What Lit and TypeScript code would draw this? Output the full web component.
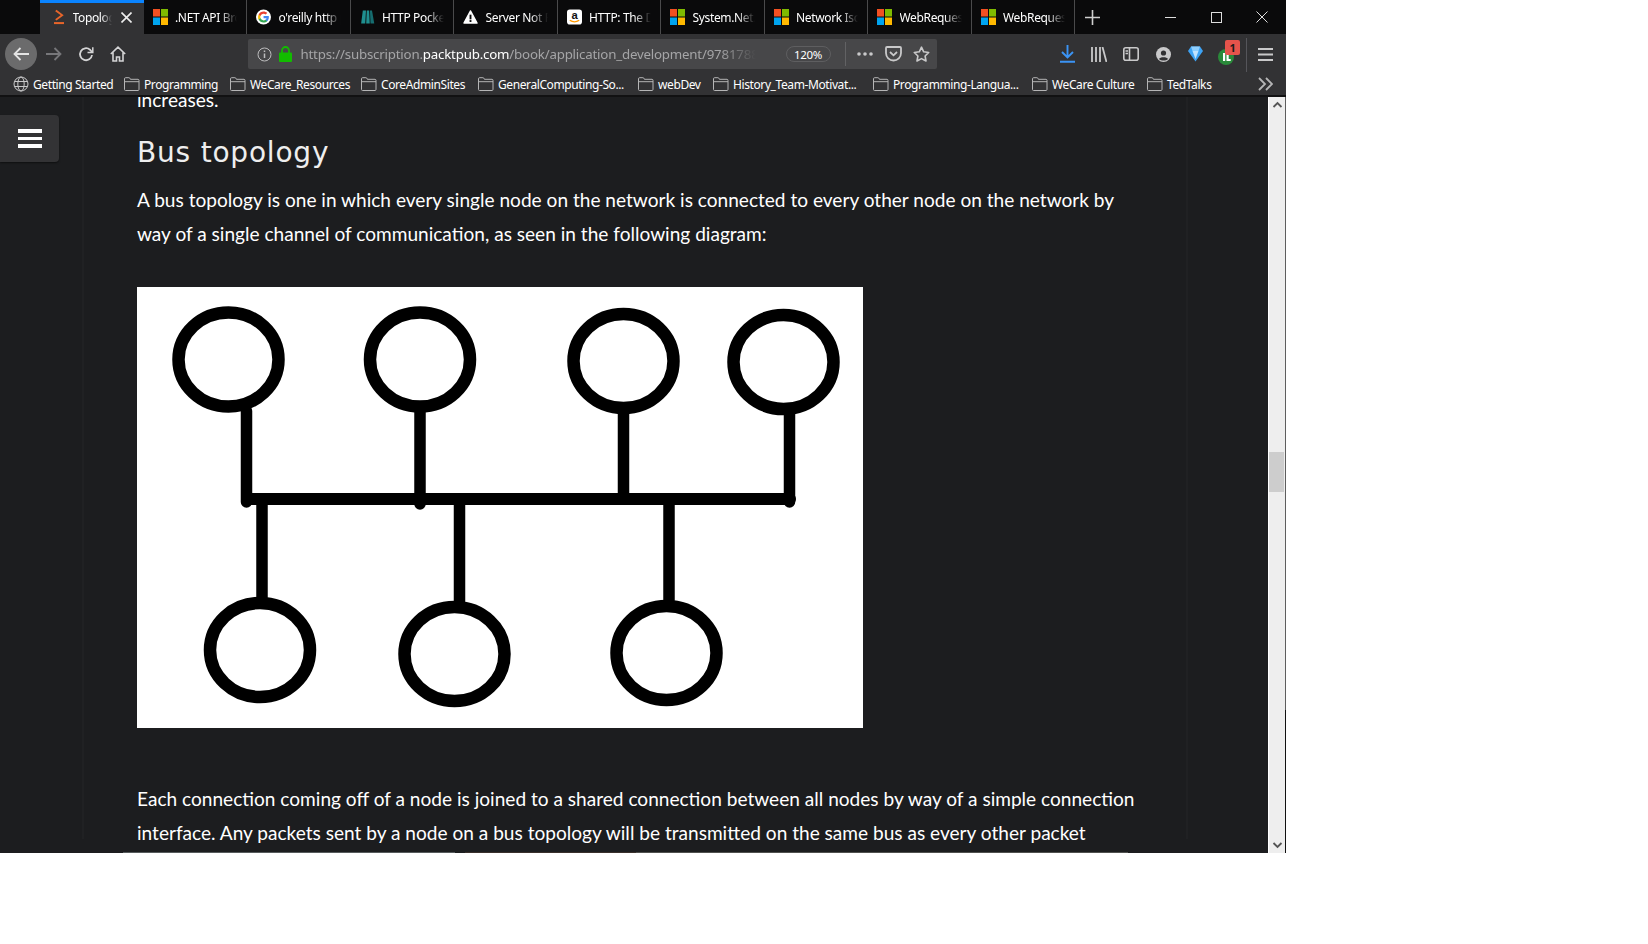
import { LitElement, html, css, svg } from "lit";
import { customElement } from "lit/decorators.js";

const msLogo = html`<svg class="fav" viewBox="0 0 15 16">
  <rect width="7" height="7.5" fill="#f25022" /><rect x="8" width="7" height="7.5" fill="#7fba00" />
  <rect y="8.5" width="7" height="7.5" fill="#00a4ef" /><rect x="8" y="8.5" width="7" height="7.5" fill="#ffb900" />
</svg>`;

const googleLogo = html`<svg class="fav" viewBox="0 0 24 24">
  <circle cx="12" cy="12" r="12" fill="#fff" />
  <g transform="translate(2.5 2.5) scale(.8)">
    <path fill="#4285F4" d="M22.56 12.25c0-.78-.07-1.53-.2-2.25H12v4.26h5.92c-.26 1.37-1.04 2.53-2.21 3.31v2.77h3.57c2.08-1.92 3.28-4.74 3.28-8.09z" />
    <path fill="#34A853" d="M12 23c2.97 0 5.46-.98 7.28-2.66l-3.57-2.77c-.98.66-2.23 1.06-3.71 1.06-2.86 0-5.29-1.93-6.16-4.53H2.18v2.84C3.99 20.53 7.7 23 12 23z" />
    <path fill="#FBBC05" d="M5.84 14.09c-.22-.66-.35-1.36-.35-2.09s.13-1.43.35-2.09V7.07H2.18C1.43 8.55 1 10.22 1 12s.43 3.45 1.18 4.93l2.85-2.22.81-.62z" />
    <path fill="#EA4335" d="M12 5.38c1.62 0 3.06.56 4.21 1.64l3.15-3.15C17.45 2.09 14.97 1 12 1 7.7 1 3.99 3.47 2.18 7.07l3.66 2.84c.87-2.6 3.3-4.53 6.16-4.53z" />
  </g>
</svg>`;

const pocketBook = html`<svg class="fav" viewBox="0 0 16 16">
  <path fill="#1f8f8f" d="M3 1h3.4L5.6 15H1.2zM7.2 1h2.6l.6 14H6.6z" />
  <path fill="#166d70" d="M10.6 1h2.2l2.4 14h-4z" />
</svg>`;

const warning = html`<svg class="fav" viewBox="0 0 16 16">
  <path fill="#fff" stroke="#fff" stroke-width="1.4" stroke-linejoin="round" d="M8 1.5 15 14.5H1z" />
  <rect x="7" y="5.5" width="2" height="5" fill="#0a0a0b" /><rect x="7" y="11.3" width="2" height="2" fill="#0a0a0b" />
</svg>`;

const amazon = html`<svg class="fav" viewBox="0 0 16 16">
  <rect width="16" height="16" rx="3" fill="#fff" />
  <text x="8" y="10.5" text-anchor="middle" font-family="Liberation Sans" font-weight="700" font-size="12" fill="#111">a</text>
  <path d="M3 11.5q5 3.4 10 0" fill="none" stroke="#f90" stroke-width="1.5" />
</svg>`;

const packt = html`<svg class="fav packt" viewBox="0 0 11 16">
  <path d="M2 1l7 6-7 6" transform="scale(1 .86)" fill="none" stroke="#e8652a" stroke-width="2.2" />
  <rect y="13.6" width="11" height="2.2" fill="#e8652a" />
</svg>`;

const folder = svg`<path d="M.5 3V1.8c0-.7.4-1.1 1-1.1h3.4c.6 0 1 .3 1.3 1.1l.2.5h7.6c.6 0 1 .4 1 1v9.2c0 .6-.4 1-1 1h-12.5c-.6 0-1-.4-1-1zM.5 4.7h14.500" fill="none" stroke="#b5b5b6" />`;

const globe = html`<svg class="globe" viewBox="0 0 16 16" fill="none" stroke="#c9c9ca">
  <circle cx="8" cy="8" r="7" /><ellipse cx="8" cy="8" rx="3.200" ry="7" /><path d="M1.400 5.500h13.200M1.400 10.500h13.200" />
</svg>`;

const tabs: [string, unknown][] = [
  [".NET API Browser", msLogo],
  ["o'reilly http pocket", googleLogo],
  ["HTTP Pocket Ref", pocketBook],
  ["Server Not Found", warning],
  ["HTTP: The Definitive", amazon],
  ["System.Net.Http", msLogo],
  ["Network Isolation", msLogo],
  ["WebRequest Class", msLogo],
  ["WebRequest Class", msLogo],
];

const bookmarks: [string, number][] = [
  ["Programming", 106],
  ["WeCare_Resources", 131],
  ["CoreAdminSites", 117],
  ["GeneralComputing-So...", 160],
  ["webDev", 75],
  ["History_Team-Motivat...", 160],
  ["Programming-Langua...", 159],
  ["WeCare Culture", 115],
  ["TedTalks", 90],
];

@customElement("app-root")
export class AppRoot extends LitElement {
  static styles = css`
    :host {
      display: block;
      width: 1648px;
      height: 944px;
      background: #fff;
      overflow: hidden;
    }

    .window {
      width: 1286px;
      height: 853px;
      display: flex;
      flex-direction: column;
      background: #323234;
      font-family: "Noto Sans", sans-serif;
      font-size: 12px;
      letter-spacing: -0.35px;
      color: #fff;
      overflow: hidden;
    }

    /* tab strip */
    .tabbar {
      height: 34px;
      flex: none;
      display: flex;
      background: #0a0a0b;
      padding-left: 40px;
    }

    .tab {
      width: 103.5px;
      box-sizing: border-box;
      display: flex;
      align-items: center;
      gap: 7.5px;
      padding: 0 9px 0 9px;
      border-right: 1px solid #4a4a4b;
    }

    .tab.active {
      background: #323234;
      border-right: none;
      border-top: 3px solid #0a84ff;
      padding: 0 12px 3px 14px;
      gap: 8.5px;
    }

    .fav {
      width: 15px;
      height: 16px;
      flex: none;
    }

    .fav.packt {
      width: 10px;
    }

    .tab-title {
      flex: 1;
      min-width: 0;
      white-space: nowrap;
      overflow: hidden;
      -webkit-mask-image: linear-gradient(to right, #000 72%, transparent);
      mask-image: linear-gradient(to right, #000 72%, transparent);
    }

    .tab-close {
      width: 11px;
      height: 11px;
      flex: none;
    }

    .new-tab {
      width: 34px;
      display: flex;
      align-items: center;
      justify-content: center;
    }

    .win-controls {
      margin-left: auto;
      display: flex;
      padding-right: 1px;
    }

    .win-btn {
      width: 46px;
      display: flex;
      align-items: center;
      justify-content: center;
    }

    /* nav toolbar */
    .toolbar {
      height: 38px;
      flex: none;
      box-sizing: border-box;
      display: flex;
      align-items: flex-start;
      padding: 4px 0 0 5px;
    }

    .back {
      width: 32px;
      height: 32px;
      margin-right: 1px;
      border-radius: 50%;
      background: #6b6b6c;
      display: flex;
      align-items: center;
      justify-content: center;
    }

    .nav-btn {
      width: 32px;
      height: 32px;
      display: flex;
      align-items: center;
      justify-content: center;
    }

    .urlbar {
      margin: 1px 0 0 113.5px;
      width: 689.5px;
      height: 30px;
      box-sizing: border-box;
      display: flex;
      align-items: center;
      background: #474749;
      border-radius: 2px;
      padding-left: 9px;
      font-size: 13.300px;
      letter-spacing: -0.2px;
    }

    .lock {
      margin-left: 7px;
    }

    .url {
      margin-left: 9px;
      width: 455px;
      flex: none;
      white-space: nowrap;
      overflow: hidden;
      color: #a5a5a7;
      -webkit-mask-image: linear-gradient(to right, #000 92%, transparent);
      mask-image: linear-gradient(to right, #000 92%, transparent);
    }

    .url b {
      color: #fff;
      font-weight: 400;
    }

    .zoom {
      margin-left: 30px;
      width: 45px;
      height: 16px;
      box-sizing: border-box;
      border: 1px solid #5e5e60;
      border-radius: 8px;
      display: flex;
      align-items: center;
      justify-content: center;
      font-size: 11.500px;
      letter-spacing: -0.3px;
    }

    .url-sep {
      width: 1px;
      height: 24px;
      background: #626264;
      margin: 0 5px 0 14px;
    }

    .url-btn {
      width: 28.500px;
      height: 24px;
      display: flex;
      align-items: center;
      justify-content: center;
    }

    .tools {
      margin-left: 114px;
      display: flex;
      align-items: center;
      height: 32px;
    }

    .tool {
      position: relative;
      width: 32px;
      height: 32px;
      display: flex;
      align-items: center;
      justify-content: center;
    }

    .green {
      margin: 6px 0 0 -2px;
    }

    .badge {
      position: absolute;
      left: 14px;
      top: 2px;
      width: 15px;
      height: 15px;
      background: #e5534b;
      border-radius: 2px;
      color: #1b1b1b;
      font-size: 11px;
      font-weight: 700;
      line-height: 15px;
      text-align: center;
    }

    .tool-sep {
      width: 1px;
      height: 34px;
      background: #55555a;
      margin-left: 2.5px;
    }

    .menu-btn {
      width: 37px;
      height: 32px;
      display: flex;
      align-items: center;
      justify-content: center;
    }

    /* bookmarks */
    .bookmarks {
      height: 25px;
      flex: none;
      box-sizing: border-box;
      display: flex;
      align-items: center;
      padding: 1px 0 0 13px;
      border-bottom: 2px solid #111112;
      letter-spacing: -0.4px;
    }

    .bm {
      display: flex;
      align-items: center;
      gap: 4px;
      flex: none;
      white-space: nowrap;
    }

    .bm-icon {
      width: 16px;
      height: 14px;
      flex: none;
    }

    .globe {
      width: 16px;
      height: 16px;
      flex: none;
    }

    .bm-more {
      margin-left: auto;
      margin-right: 13px;
      width: 15px;
      height: 14px;
    }

    /* page */
    .viewport {
      flex: 1;
      min-height: 0;
      display: flex;
      background: #1c1d1f;
    }

    .page {
      position: relative;
      flex: 1;
      min-width: 0;
      overflow: hidden;
      background: #1c1d1f;
    }

    .side-btn {
      position: absolute;
      left: 0;
      top: 18px;
      width: 59px;
      height: 47px;
      background: #333335;
      border-radius: 0 4px 4px 0;
      box-shadow: 0 1px 2px rgba(0, 0, 0, 0.5);
      display: flex;
      flex-direction: column;
      justify-content: center;
      gap: 4px;
      padding-left: 18px;
      box-sizing: border-box;
    }

    .side-btn i {
      display: block;
      width: 24px;
      height: 3.500px;
      background: #fff;
    }

    .column {
      box-sizing: border-box;
      margin-left: 82px;
      width: 1106px;
      height: 100%;
      padding: 0 0 0 53px;
      border-left: 2px solid #202123;
      border-right: 2px solid #202123;
      font-family: Lato, sans-serif;
      font-size: 19.080px;
      line-height: 34px;
      letter-spacing: 0;
      color: #fff;
    }

    .column p {
      margin: 0;
      width: 1000px;
    }

    .column p.clipped {
      margin-top: -14px;
    }

    h2 {
      margin: 18px 0 12px;
      font-family: "DejaVu Sans", sans-serif;
      font-size: 28px;
      font-weight: 400;
      line-height: 36px;
      letter-spacing: 0.8px;
      color: #eee;
    }

    .figure {
      display: block;
      width: 726px;
      height: 441px;
      margin: 36px 0 53.5px;
      background: #fff;
    }

    .fold-line {
      position: absolute;
      left: 123px;
      bottom: 0;
      width: 1005px;
      height: 1px;
      background: linear-gradient(to right, #565b5c 33%, #1c1d1f 33%, #1c1d1f 34%, #3a302c 34%, #3a302c 51%, #50514f 51%);
    }

    .scrollbar {
      width: 16px;
      margin-left: 1px;
      flex: none;
      background: #eeeeee;
      display: flex;
      flex-direction: column;
      align-items: center;
      justify-content: space-between;
      position: relative;
      border-left: 1px solid #fff;
      box-sizing: content-box;
    }

    .thumb {
      position: absolute;
      left: 0;
      top: 355px;
      width: 15px;
      height: 40px;
      background: #cdcdcd;
    }

    .arrow {
      width: 15px;
      height: 16px;
      display: block;
    }

    .edge {
      width: 1px;
      flex: none;
      background: linear-gradient(#5e5e5e 613px, #111 613px);
    }
  `;

  private renderFigure() {
    const top = [
      [228.5, 359.5],
      [420, 359.5],
      [623.5, 361],
      [783.5, 362],
    ];
    const bottom = [
      [260, 650],
      [454.5, 654],
      [666.5, 653],
    ];
    const lines = [
      [246.5, 411, 502],
      [420, 411, 504],
      [623.5, 413, 499],
      [789.5, 414, 502],
      [262, 499, 597],
      [459.5, 499, 601],
      [669, 499, 600],
    ];
    return html`<svg class="figure" viewBox="137 287 726 441">
      <g fill="none" stroke="#000" stroke-width="11.500" stroke-linecap="round">
        ${[...top, ...bottom].map(([cx, cy]) => svg`<ellipse cx=${cx} cy=${cy} rx="50" ry="47" stroke-width="12.500" />`)}
        ${lines.map(([x, y1, y2]) => svg`<path d="M${x} ${y1}V${y2}" />`)}
        <path d="M248 499H790" stroke-width="12" />
      </g>
    </svg>`;
  }

  render() {
    return html`<div class="window">
      <div class="tabbar">
        <div class="tab active">
          ${packt}
          <span class="tab-title">Topology</span>
          <svg class="tab-close" viewBox="0 0 11 11" stroke="#eee" stroke-width="1.600"><path d="M.5.5l10 10M10.500.5l-10 10" /></svg>
        </div>
        ${tabs.map(([title, icon]) => html`<div class="tab">${icon}<span class="tab-title">${title}</span></div>`)}
        <div class="new-tab">
          <svg width="15" height="15" viewBox="0 0 15 15" stroke="#cfcfcf" stroke-width="1.600"><path d="M7.500 0v15M0 7.500h15" /></svg>
        </div>
        <div class="win-controls">
          <div class="win-btn"><svg width="11" height="11" stroke="#ddd"><path d="M0 5.500h11" /></svg></div>
          <div class="win-btn"><svg width="11" height="11" fill="none" stroke="#ddd"><rect x=".5" y=".5" width="10" height="10" /></svg></div>
          <div class="win-btn"><svg width="12" height="12" stroke="#ddd"><path d="M.5.5l11 11M11.500.5l-11 11" /></svg></div>
        </div>
      </div>

      <div class="toolbar">
        <div class="back">
          <svg width="16" height="14" viewBox="0 0 16 14" fill="none" stroke="#e4e4e4" stroke-width="1.800"><path d="M16 7H1.500M7.500 1 1.500 7l6 6" /></svg>
        </div>
        <div class="nav-btn">
          <svg width="16" height="14" viewBox="0 0 16 14" fill="none" stroke="#77777a" stroke-width="1.800"><path d="M0 7h14.500M8.500 1l6 6-6 6" /></svg>
        </div>
        <div class="nav-btn">
          <svg width="16" height="16" viewBox="0 0 16 16" fill="none" stroke="#d4d4d5" stroke-width="1.800"><path d="M14 9a6 6 0 1 1-2-5.300L14 6" /><path d="M14.800 1.200V6.500H9.500" stroke-width="1.500" /></svg>
        </div>
        <div class="nav-btn">
          <svg width="16" height="16" viewBox="0 0 16 16" fill="none" stroke="#d4d4d5" stroke-width="1.600"><path d="M.8 8 8 1.200 15.200 8M3 6.500V15h3.500v-4h3v4H13V6.500" /></svg>
        </div>

        <div class="urlbar">
          <svg width="15" height="15" viewBox="0 0 15 15" fill="none" stroke="#bdbdbe"><circle cx="7.500" cy="7.500" r="6.500" /><path d="M7.500 6.500v4.500M7.500 3.500v1.500" stroke-width="1.500" /></svg>
          <svg class="lock" width="13" height="16" viewBox="0 0 13 16"><path d="M3 7V4.500a3.500 3.500 0 0 1 7 0V7" fill="none" stroke="#12bc00" stroke-width="1.800" /><rect y="6.500" width="13" height="9.500" rx="1" fill="#12bc00" /></svg>
          <div class="url">https://subscription.<b>packtpub.com</b>/book/application_development/9781788</div>
          <div class="zoom">120%</div>
          <div class="url-sep"></div>
          <div class="url-btn">
            <svg width="16" height="4" fill="#c9c9ca"><circle cx="2" cy="2" r="1.800" /><circle cx="8" cy="2" r="1.800" /><circle cx="14" cy="2" r="1.800" /></svg>
          </div>
          <div class="url-btn">
            <svg width="17" height="16" viewBox="0 0 17 16" fill="none" stroke="#c9c9ca" stroke-width="1.800"><path d="M2 1h13c.5 0 1 .4 1 1v5a7.500 7.500 0 0 1-15 0V2c0-.6.500-1 1-1z" /><path d="M5 6l3.500 3.300L12 6" /></svg>
          </div>
          <div class="url-btn">
            <svg width="17" height="16" viewBox="0 0 17 16" fill="none" stroke="#c9c9ca" stroke-width="1.600" stroke-linejoin="round"><path d="M8.500 1.200l2.200 4.600 5 .7-3.600 3.500.9 5-4.500-2.400L4 15l.9-5L1.300 6.500l5-.7z" /></svg>
          </div>
        </div>

        <div class="tools">
          <div class="tool">
            <svg width="15" height="18" viewBox="0 0 15 18" fill="none" stroke="#3b94f5" stroke-width="1.900"><path d="M7.500 0v12M2 7l5.500 5.500L13 7M0 16.800h15" /></svg>
          </div>
          <div class="tool">
            <svg width="16" height="15" viewBox="0 0 16 15" fill="none" stroke="#c9c9ca" stroke-width="1.800"><path d="M1 0v15M5 0v15M9 0v15M11.500 0l4 15" /></svg>
          </div>
          <div class="tool">
            <svg width="16" height="14" viewBox="0 0 16 14" fill="none" stroke="#c9c9ca" stroke-width="1.600"><rect x=".8" y=".8" width="14.400" height="12.400" rx="2" /><path d="M6.500 1v12M2.500 4h2.500M2.500 6.500h2.500" /></svg>
          </div>
          <div class="tool">
            <svg width="15" height="15" viewBox="0 0 15 15"><circle cx="7.500" cy="7.500" r="7.500" fill="#c9c9ca" /><circle cx="7.500" cy="6" r="2.600" fill="#323234" /><path d="M3 12c1-2.400 8-2.400 9 0-2 2-7 2-9 0z" fill="#323234" /></svg>
          </div>
          <div class="tool">
            <svg width="15" height="16" viewBox="0 0 15 16"><path d="M3 .5h9L15 5 7.500 15.500 0 5z" fill="#3da3f5" /><path d="M4.500 5h6L7.500 13z" fill="#bfe3ff" /><path d="M3 .5h9L10.500 5h-6z" fill="#8fd0ff" /></svg>
          </div>
          <div class="tool">
            <svg class="green" width="16" height="16" viewBox="0 0 16 16"><circle cx="8" cy="8" r="8" fill="#2a8a3a" /><rect x="5" y="4" width="2.200" height="8" fill="#fff" /><path d="M8.500 4h2.200v6h2v2H8.500z" fill="#fff" /></svg>
            <span class="badge">1</span>
          </div>
        </div>
        <div class="tool-sep"></div>
        <div class="menu-btn">
          <svg width="15" height="13" fill="#c9c9ca"><rect width="15" height="2" /><rect y="5.500" width="15" height="2" /><rect y="11" width="15" height="2" /></svg>
        </div>
      </div>

      <div class="bookmarks">
        <div class="bm" style="width:111px">${globe}<span>Getting Started</span></div>
        ${bookmarks.map(
          ([name, w]) => html`<div class="bm" style="width:${w}px">
            <svg class="bm-icon" viewBox="0 0 16 14">${folder}</svg><span>${name}</span>
          </div>`
        )}
        <svg class="bm-more" viewBox="0 0 15 14" fill="none" stroke="#b5b5b6" stroke-width="1.800"><path d="M1 1l6 6-6 6M8 1l6 6-6 6" /></svg>
      </div>

      <div class="viewport">
        <div class="page">
          <div class="column">
            <p class="clipped">increases.</p>
            <h2>Bus topology</h2>
            <p>A bus topology is one in which every single node on the network is connected to every other node on the network by way of a single channel of communication, as seen in the following diagram:</p>
            ${this.renderFigure()}
            <p>Each connection coming off of a node is joined to a shared connection between all nodes by way of a simple connection interface. Any packets sent by a node on a bus topology will be transmitted on the same bus as every other packet</p>
          </div>
          <div class="side-btn"><i></i><i></i><i></i></div>
          <div class="fold-line"></div>
        </div>
        <div class="scrollbar">
          <svg class="arrow" viewBox="0 0 15 16" fill="none" stroke="#555" stroke-width="1.800"><path d="M3.500 10 7.500 6l4 4" /></svg>
          <div class="thumb"></div>
          <svg class="arrow" viewBox="0 0 15 16" fill="none" stroke="#555" stroke-width="1.800"><path d="M3.500 6l4 4 4-4" /></svg>
        </div>
        <div class="edge"></div>
      </div>
    </div>`;
  }
}
